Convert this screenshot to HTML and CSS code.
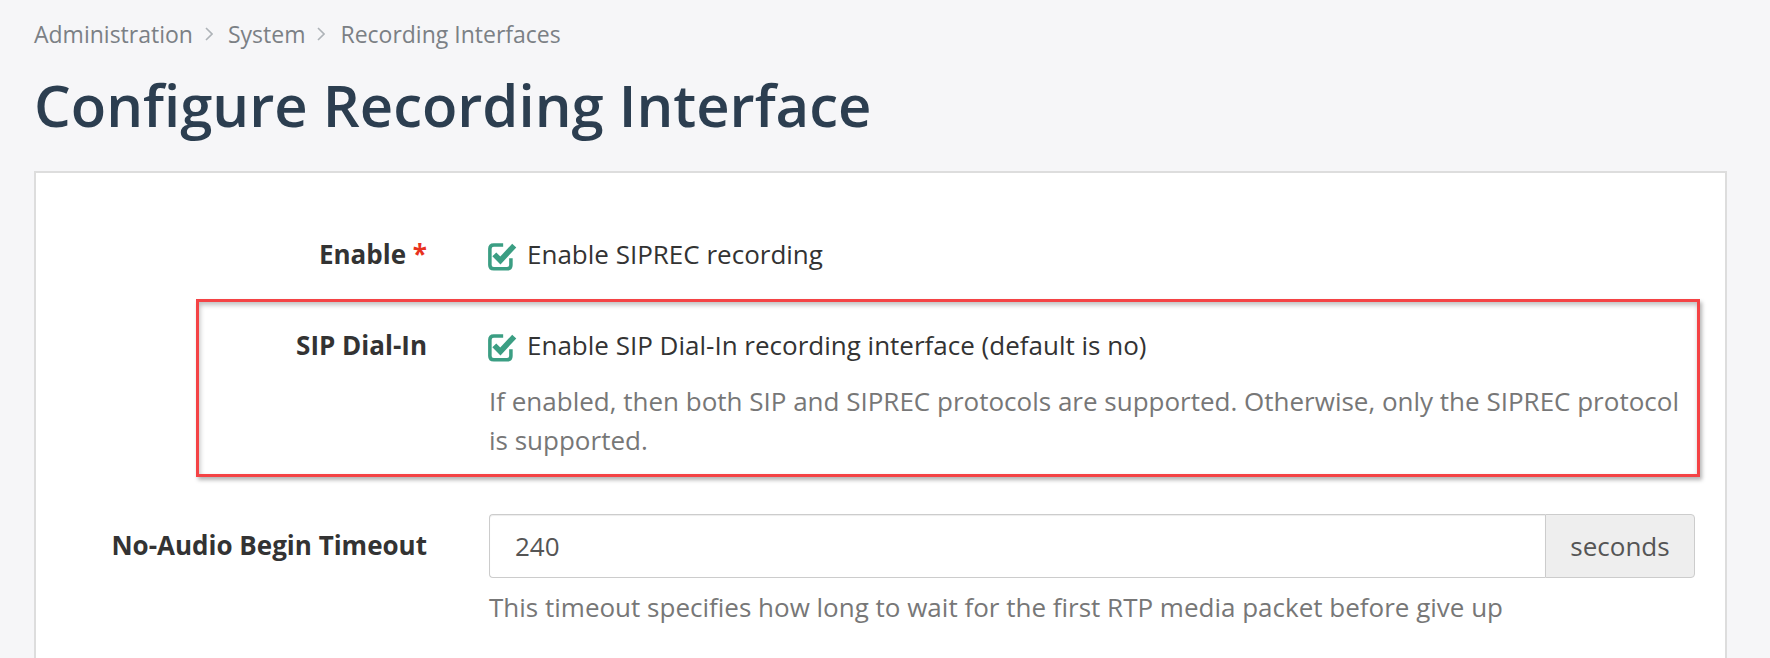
FILE: index.html
```html
<!DOCTYPE html>
<html lang="en">
  <head>
    <meta charset="UTF-8" />
    <meta name="viewport" content="width=device-width, initial-scale=1.0" />
    <title>Configure Recording Interface</title>
    <link rel="stylesheet" href="styles.css">
  </head>
  <body>
    <div class="page">
      <nav class="breadcrumb">
        <span>Administration</span>
        <svg class="crumb-sep" width="8" height="14" viewBox="0 0 8 14"><polyline points="1,1 7,7 1,13" /></svg>
        <span>System</span>
        <svg class="crumb-sep" width="8" height="14" viewBox="0 0 8 14"><polyline points="1,1 7,7 1,13" /></svg>
        <span>Recording Interfaces</span>
      </nav>

      <h1>Configure Recording Interface</h1>

      <div class="card">
        <div class="form-row row-enable">
          <div class="label">Enable <span class="required">*</span></div>
          <div class="control">
            <label class="check">
              <svg class="check-icon" width="31" height="31" viewBox="0 0 28 28">
                <path class="box" d="M15.5 4.5 H7 Q3.5 4.5 3.5 8 V22.5 Q3.5 26 7 26 H19 Q22.5 26 22.5 22.5 V16.5" />
                <path class="tick" d="M7.5 13 L13 18.5 L25.5 5" />
              </svg>
              Enable SIPREC recording
            </label>
          </div>
        </div>

        <div class="form-row row-dialin highlight">
          <div class="label">SIP Dial-In</div>
          <div class="control">
            <label class="check">
              <svg class="check-icon" width="31" height="31" viewBox="0 0 28 28">
                <path class="box" d="M15.5 4.5 H7 Q3.5 4.5 3.5 8 V22.5 Q3.5 26 7 26 H19 Q22.5 26 22.5 22.5 V16.5" />
                <path class="tick" d="M7.5 13 L13 18.5 L25.5 5" />
              </svg>
              Enable SIP Dial-In recording interface (default is no)
            </label>
            <p class="help help-spaced">If enabled, then both SIP and SIPREC protocols are supported. Otherwise, only the SIPREC protocol is supported.</p>
          </div>
        </div>

        <div class="form-row row-timeout">
          <div class="label">No-Audio Begin Timeout</div>
          <div class="control">
            <div class="input-group">
              <input type="text" value="240" />
              <span class="addon">seconds</span>
            </div>
            <p class="help">This timeout specifies how long to wait for the first RTP media packet before give up</p>
          </div>
        </div>
      </div>
    </div>
  </body>
</html>
```

FILE: styles.css
```css
/* Page */
body {
  margin: 0;
  background-color: #f6f6f8;
  font-family: "Open Sans", "DejaVu Sans", sans-serif;
  color: #333;
}
.page {
  padding: 17px 43px 0 34px;
}

/* Breadcrumb */
.breadcrumb {
  display: flex;
  align-items: center;
  font-size: 23px;
  line-height: 34px;
  color: #7b8085;
}
.crumb-sep {
  margin: 0 15px 0 12px;
}
.crumb-sep polyline {
  fill: none;
  stroke: #aeb3b8;
  stroke-width: 1.6;
}

h1 {
  margin: 19px 0 31px;
  font-size: 58px;
  line-height: 70px;
  font-weight: 600;
  color: #2c3e50;
}

/* Card with the form */
.card {
  background-color: #fff;
  border: 2px solid #ddd;
  padding: 62px 30px 40px 0;
}
.form-row {
  display: grid;
  grid-template-columns: 391px 1fr;
  column-gap: 62px;
  font-size: 26px;
  line-height: 39px;
}
.label {
  text-align: right;
  font-weight: 700;
}
.required {
  color: #e8321e;
}
.row-enable {
  margin-bottom: 52px;
}
.row-dialin {
  margin-bottom: 54px;
}
.row-timeout {
  align-items: start;
}
.row-timeout .label {
  margin-top: 12px;
}

/* Checkbox */
.check {
  display: flex;
  align-items: center;
  gap: 10px;
}
.check-icon {
  margin: 1px 0 0 -3px;
  flex-shrink: 0;
}
.check-icon path {
  fill: none;
  stroke: #3b9e83;
}
.check-icon .box {
  stroke-width: 3.2;
}
.check-icon .tick {
  stroke-width: 5;
  stroke-linejoin: miter;
}

.help {
  margin: 10px 0 0;
  color: #777;
}
.help-spaced {
  margin-top: 17px;
}

/* Annotation around the SIP Dial-In row */
.highlight {
  position: relative;
}
.highlight::after {
  content: "";
  position: absolute;
  left: 160px;
  right: -5px;
  top: -27px;
  bottom: -17px;
  border: 3px solid #f44345;
  box-shadow: 2px 3px 4px rgba(0, 0, 0, 0.3), inset 1px 3px 5px rgba(0, 0, 0, 0.25);
  pointer-events: none;
}

/* Input with unit addon */
.input-group {
  display: flex;
  height: 64px;
}
.input-group input {
  flex: 1;
  min-width: 0;
  border: 1px solid #ccc;
  border-right: none;
  border-radius: 4px 0 0 4px;
  padding: 0 25px;
  font: inherit;
  color: #555;
  box-shadow: inset 0 1px 1px rgba(0, 0, 0, 0.075);
}
.addon {
  width: 150px;
  box-sizing: border-box;
  display: flex;
  align-items: center;
  justify-content: center;
  background-color: #eee;
  border: 1px solid #ccc;
  border-radius: 0 4px 4px 0;
  color: #555;
}
```
